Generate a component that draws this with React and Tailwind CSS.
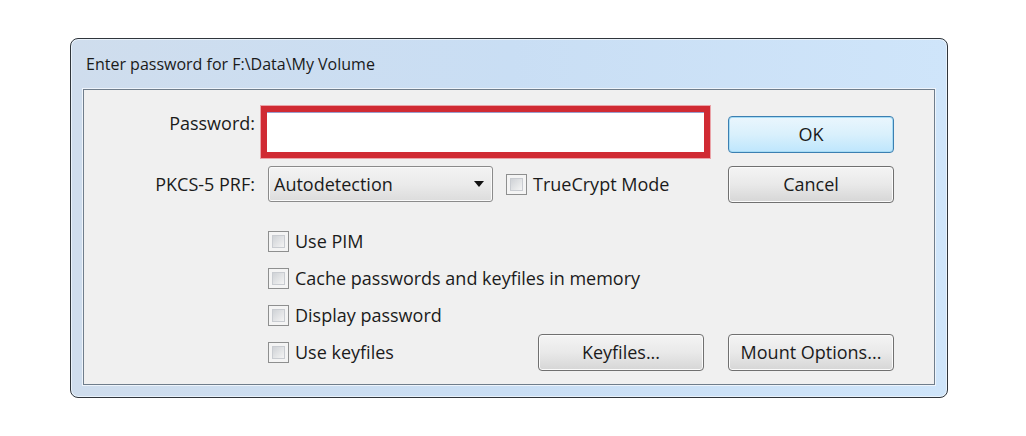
import React from "react";

function Box() {
  return (
    <span className="flex h-[21px] w-[21px] shrink-0 border border-[#8e8f8f] bg-[#f4f4f4] p-[3px]">
      <span className="flex-1 border border-[#c9ccd1] bg-gradient-to-br from-[#cfd2d6] to-[#f4f4f4]" />
    </span>
  );
}

function Btn({ children, primary }) {
  return (
    <div
      className={
        "flex h-[37px] w-[166px] shrink-0 items-center justify-center rounded-[4px] border text-[18px] text-[#1b1b1b] " +
        (primary
          ? "border-[#3c7fb1] bg-gradient-to-b from-[#eaf6fd] via-[#d9f0fc] to-[#bee6fd] shadow-[inset_0_0_0_1px_#a6dcf5]"
          : "border-[#707070] bg-gradient-to-b from-[#f4f4f4] via-[#e9e9e9] to-[#d6d6d6] shadow-[inset_0_0_0_1px_#fbfbfb]")
      }
    >
      {children}
    </div>
  );
}

function Check({ label }) {
  return (
    <div className="flex items-center gap-[6px]">
      <Box />
      <span>{label}</span>
    </div>
  );
}

export default function App() {
  return (
    <div
      className="h-[436px] w-[1026px] bg-white pl-[70px] pt-[38px] text-[18px] text-[#1b1b1b]"
      style={{ fontFamily: '"Open Sans", "Noto Sans", sans-serif' }}
    >
      <div className="flex h-[360px] w-[878px] flex-col rounded-[8px] border border-[#2f353b] bg-gradient-to-r from-[#cfdded] via-[#c9def4] to-[#cfe5fa] px-[12px] pb-[12px] shadow-[inset_0_0_0_1px_#e9f2fb]">
        <div className="flex h-[50px] items-center pl-[3px] text-[16px] text-[#1a1a1a]">
          Enter password for F:\Data\My Volume
        </div>
        <div className="flex h-[296px] flex-col border border-[#6f7d8b] bg-[#f0f0f0] shadow-[0_0_0_1px_#eef4fb]">
          {/* Row 1 */}
          <div className="mt-[16px] flex items-start pr-[40px]">
            <div className="flex w-[171px] justify-end pt-[4px]">Password:</div>
            <div className="ml-[6px] h-[52px] w-[449px] border-[6px] border-[#d02a33] bg-white shadow-[0_0_0_1px_#eaa3a8]">
              <div className="h-full w-full border-t border-[#9a9ccc] bg-white" />
            </div>
            <div className="ml-auto mt-[10px]">
              <Btn primary>OK</Btn>
            </div>
          </div>
          {/* Row 2 */}
          <div className="mt-[8px] flex h-[36px] items-center pr-[40px]">
            <div className="flex w-[171px] justify-end">PKCS-5 PRF:</div>
            <div className="ml-[13px] flex h-[36px] w-[225px] items-center justify-between rounded-[3px] border border-[#8b8b8b] bg-gradient-to-b from-[#f3f3f3] via-[#ebebeb] to-[#dcdcdc] pl-[5px] pr-[8px] shadow-[inset_0_0_0_1px_#fafafa]">
              <span>Autodetection</span>
              <svg width="10" height="6" viewBox="0 0 10 6">
                <path d="M0 0H10L5 6Z" fill="#111" />
              </svg>
            </div>
            <div className="ml-[13px]">
              <Check label="TrueCrypt Mode" />
            </div>
            <div className="ml-auto">
              <Btn>Cancel</Btn>
            </div>
          </div>
          {/* Checkbox rows */}
          <div className="mt-[21px] flex h-[37px] items-center pl-[184px]">
            <Check label="Use PIM" />
          </div>
          <div className="flex h-[37px] items-center pl-[184px]">
            <Check label="Cache passwords and keyfiles in memory" />
          </div>
          <div className="flex h-[37px] items-center pl-[184px]">
            <Check label="Display password" />
          </div>
          <div className="flex h-[37px] items-center pl-[184px] pr-[40px]">
            <Check label="Use keyfiles" />
            <div className="ml-auto flex gap-[24px]">
              <Btn>Keyfiles...</Btn>
              <Btn>Mount Options...</Btn>
            </div>
          </div>
        </div>
      </div>
    </div>
  );
}
